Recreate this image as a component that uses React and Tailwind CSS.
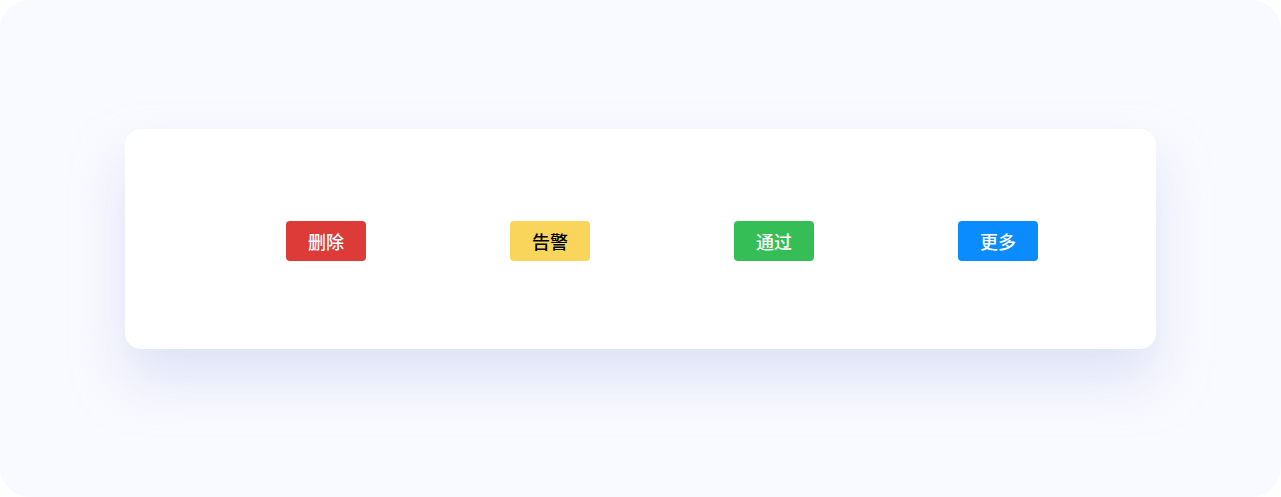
const ACTIONS = [
  { label: '删除', className: 'bg-[#dc3b37] text-white' },
  { label: '告警', className: 'bg-[#f9d65b] text-black' },
  { label: '通过', className: 'bg-[#36be56] text-white' },
  { label: '更多', className: 'bg-[#0a8cff] text-white' },
];

export default function App() {
  return (
    <div className="bg-white">
      <div
        className="w-[1281px] h-[497px] rounded-[30px] bg-[#f9faff] pt-[129px] pl-[125px]"
        style={{ fontFamily: '"Noto Sans CJK SC", "Noto Sans", sans-serif' }}
      >
        {/* action card */}
        <div className="w-[1031px] h-[220px] rounded-2xl bg-white shadow-[0_30px_50px_rgba(205,212,240,0.6)] flex items-center pl-[161px] gap-[144px] pt-1">
          {ACTIONS.map(a => (
            <button
              key={a.label}
              className={`w-20 h-10 rounded-[4px] text-[18px] font-medium flex items-center justify-center ${a.className}`}
            >
              {a.label}
            </button>
          ))}
        </div>
      </div>
    </div>
  );
}
